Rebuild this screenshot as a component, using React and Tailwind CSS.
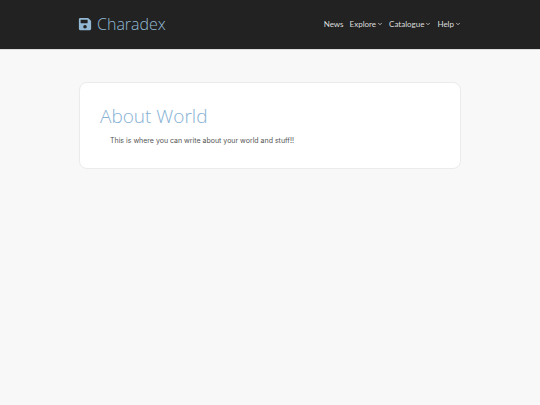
import { FaSave } from 'react-icons/fa';
import { FiChevronDown } from 'react-icons/fi';

const links = [
  { label: 'News', menu: false },
  { label: 'Explore', menu: true },
  { label: 'Catalogue', menu: true },
  { label: 'Help', menu: true },
];

const Navbar = () => (
  <header className="bg-[#222222] border-b border-[#dddddd]">
    <div className="max-w-[384px] mx-auto h-[49px] pr-px pb-0.5 flex items-center justify-between">
      <a href="#home" className="flex items-center gap-[5px] text-[#93b9d4]">
        <FaSave className="size-3.5" />
        <span className="text-[16px] leading-5 font-[350] font-['Open_Sans',sans-serif]">Charadex</span>
      </a>
      <nav className="flex items-center gap-1.5">
        {links.map((link) =>
          link.menu ? (
            <button key={link.label} type="button" className="flex items-center gap-px text-[8px] leading-3 text-[#dddddd]">
              {link.label}
              <FiChevronDown className="size-1.5 mt-px" strokeWidth={3} />
            </button>
          ) : (
            <a key={link.label} href="#news" className="text-[8px] leading-3 text-[#dddddd]">
              {link.label}
            </a>
          )
        )}
      </nav>
    </div>
  </header>
);

const App = () => {
  return (
    <div className="min-h-screen bg-[#f8f8f8] font-['Lato',sans-serif]">
      <Navbar />
      <main className="max-w-[382px] mx-auto pt-8">
        <section className="bg-white border border-[#ebebeb] rounded-lg px-5 pt-[21px] pb-[17px]">
          <h1 className="text-[19px] leading-6 font-[350] text-[#86b1d3] font-['Open_Sans',sans-serif]">About World</h1>
          <p className="px-2.5 pt-[7px] pb-1 text-[7px] leading-3 text-[#555555] font-['Inter',sans-serif]">
            This is where you can write about your world and stuff!!
          </p>
        </section>
      </main>
    </div>
  );
};

export default App;
